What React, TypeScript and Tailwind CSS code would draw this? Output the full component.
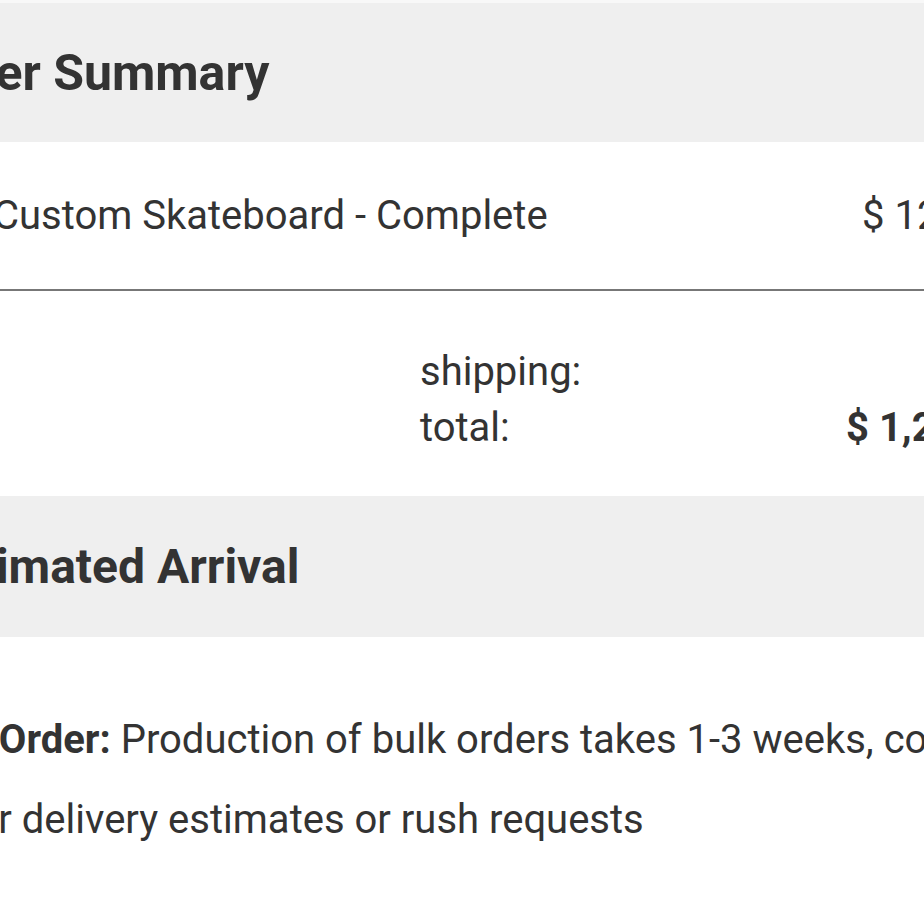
import React from 'react';

// Order summary panel, cropped view
const App: React.FC = () => {
  return (
    <div className="w-[924px] h-[924px] overflow-hidden bg-white text-[#333333] font-['Roboto','Liberation_Sans',sans-serif]">
      <div className="h-[3px] bg-[#f8f8f8]" />

      {/* header */}
      <div className="h-[139px] bg-[#efefef] flex items-center">
        <h2 className="-ml-[85px] text-[50px] font-bold whitespace-nowrap leading-none">Order Summary</h2>
      </div>

      {/* line item */}
      <div className="h-[149px] flex items-center border-b-2 border-[#777777]">
        <span className="-ml-[7px] text-[40px] whitespace-nowrap">Custom Skateboard - Complete</span>
        <span className="ml-auto w-[62px] shrink-0 text-[40px] whitespace-nowrap">$ 129.00</span>
      </div>

      {/* totals */}
      <div className="h-[205px] pt-[53px] pl-[420px]">
        <div className="flex items-center h-[56px] text-[40px]">
          <span className="whitespace-nowrap">shipping:</span>
        </div>
        <div className="flex items-center h-[56px] text-[40px]">
          <span className="whitespace-nowrap">total:</span>
          <span className="ml-auto w-[78px] shrink-0 font-bold whitespace-nowrap">$ 1,290.00</span>
        </div>
      </div>

      {/* arrival header */}
      <div className="h-[141px] bg-[#efefef] flex items-center">
        <h2 className="-ml-[72px] text-[48px] font-bold whitespace-nowrap leading-none">Estimated Arrival</h2>
      </div>

      {/* note */}
      <div className="pt-[63px]">
        <p className="-ml-[91px] text-[40px] leading-[80px] whitespace-nowrap">
          <b>Bulk Order:</b> Production of bulk orders takes 1-3 weeks, contact
          <br />
          us for delivery estimates or rush requests
        </p>
      </div>
    </div>
  );
};

export default App;
